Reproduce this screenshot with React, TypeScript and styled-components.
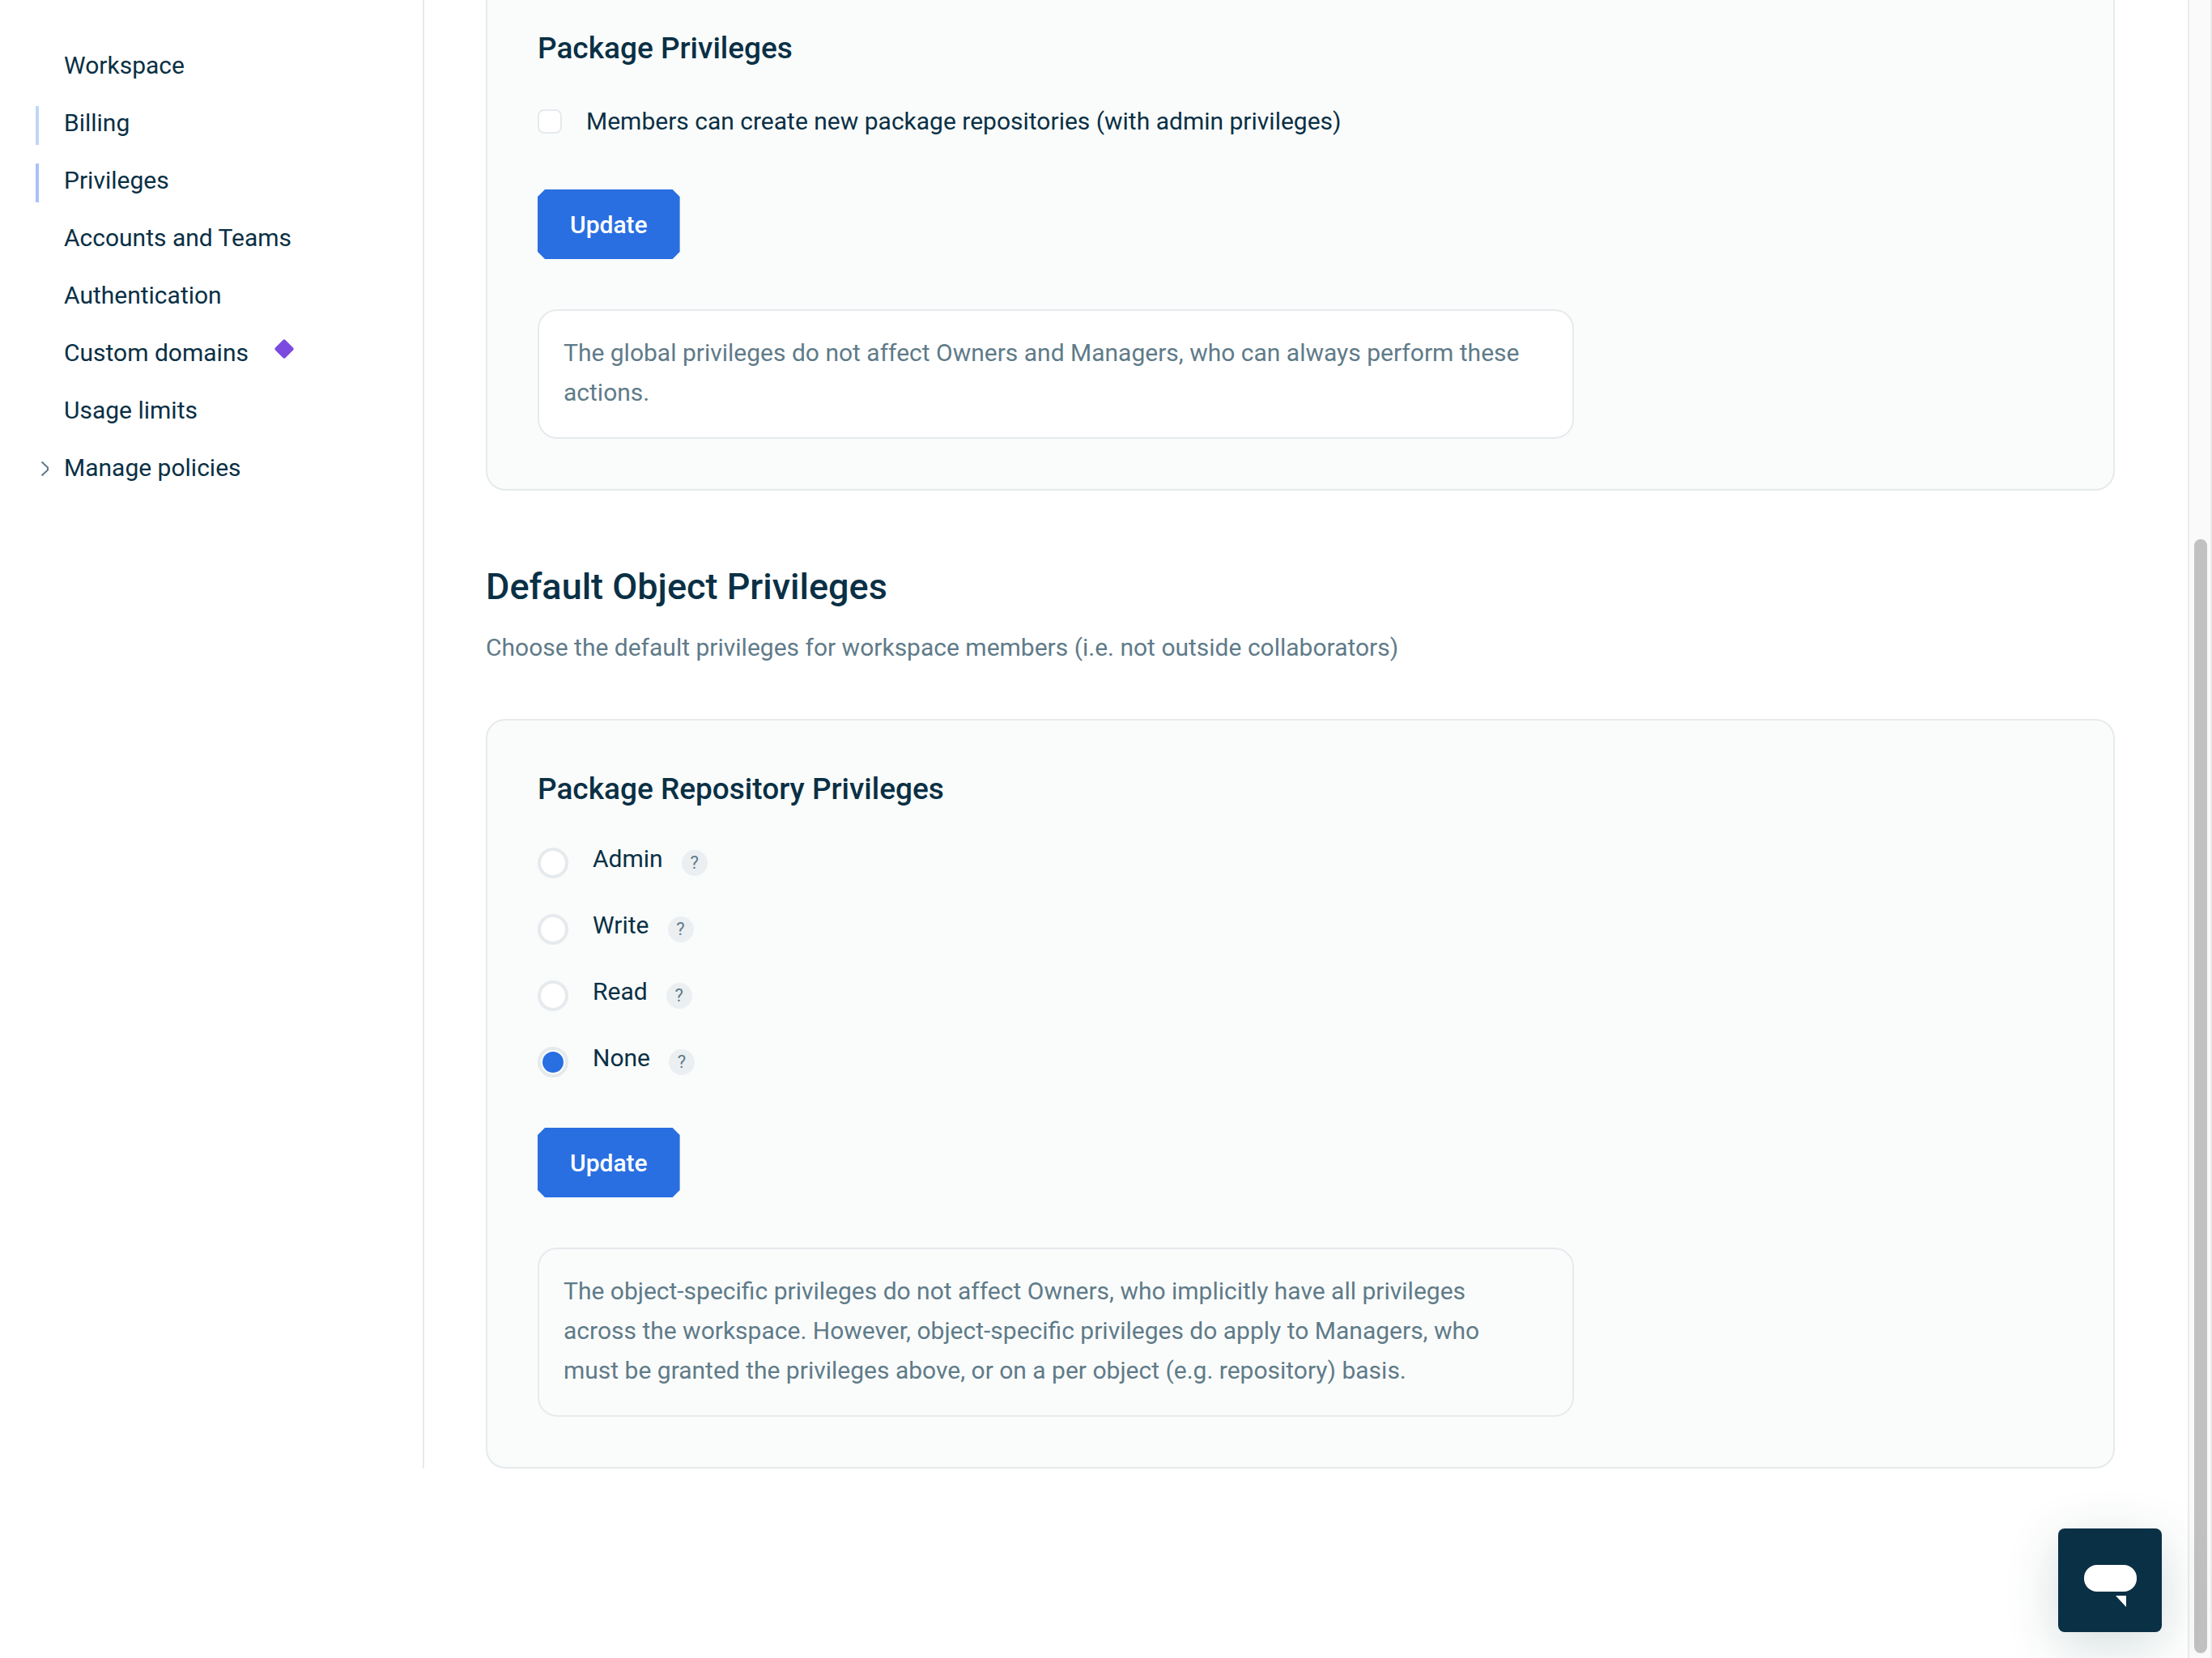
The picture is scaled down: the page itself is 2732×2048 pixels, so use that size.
import React, { useState } from "react";
import styled, { createGlobalStyle } from "styled-components";

const ink = "#0a3045";
const muted = "#5f7b89";
const line = "#e6eaed";
const surface = "#fafcfb";
const blue = "#296fe1";

const GlobalStyle = createGlobalStyle`
  *, *::before, *::after { box-sizing: border-box; }
  body {
    margin: 0;
    background: #fff;
    color: ${ink};
    font-family: Roboto, "Liberation Sans", sans-serif;
    font-size: 30px;
    line-height: 49px;
  }
  h2, h3, p, ul, fieldset { margin: 0; padding: 0; border: 0; }
  button { font: inherit; border: 0; padding: 0; cursor: pointer; }
`;

const Shell = styled.div`
  display: flex;
  height: 100vh;
  overflow: hidden;
`;

const Viewport = styled.div`
  flex: 1;
  min-width: 0;
`;

const Columns = styled.div`
  display: flex;
`;

const Sidebar = styled.nav`
  flex: 0 0 524px;
  padding: 48px 0 0 44px;
  border-right: 2px solid ${line};
`;

const NavList = styled.ul`
  list-style: none;
`;

const NavLink = styled.a<{ $marker?: string }>`
  display: flex;
  align-items: center;
  height: 71px;
  color: ${ink};
  text-decoration: none;

  &::before {
    content: "";
    width: 4px;
    height: 48px;
    background: ${(p) => p.$marker ?? "transparent"};
  }
`;

const NavGutter = styled.span`
  display: flex;
  width: 31px;
  padding: 0 0 4px 2px;
`;

const NavLabel = styled.span`
  padding-bottom: 6px;
  line-height: 48px;
`;

const PremiumMark = styled.svg`
  width: 24px;
  height: 24px;
  margin: 0 0 16px 32px;
`;

const Main = styled.main`
  flex: 1;
  min-width: 0;
  padding: 0 90px 0 76px;
`;

const Card = styled.section<{ $continued?: boolean }>`
  padding: ${(p) => (p.$continued ? "37px" : "62px")} 62px 62px;
  background: ${surface};
  border: 2px solid ${line};
  border-radius: 24px;
  ${(p) => p.$continued && "border-top: 0; border-top-left-radius: 0; border-top-right-radius: 0;"}
`;

const CardTitle = styled.h3`
  font-size: 37px;
  line-height: 46px;
  font-weight: 500;
`;

const SectionHeader = styled.header`
  display: grid;
  gap: 23px;
  padding: 92px 0 64px;
`;

const SectionTitle = styled.h2`
  font-size: 45px;
  line-height: 54px;
  font-weight: 500;
`;

const Lead = styled.p`
  color: ${muted};
`;

const CheckRow = styled.label`
  display: flex;
  align-items: center;
  gap: 30px;
  margin: 42px 0 60px;
`;

const Checkbox = styled.input`
  appearance: none;
  width: 30px;
  height: 30px;
  margin: 0;
  background: #fff;
  border: 2px solid ${line};
  border-radius: 8px;

  &:checked {
    background: ${blue};
  }
`;

const RadioList = styled.fieldset`
  display: grid;
  gap: 22px;
  margin: 38px 0 51px;
  min-width: 0;
`;

const RadioRow = styled.div`
  display: flex;
  align-items: center;
  height: 60px;
`;

const Radio = styled.input`
  appearance: none;
  width: 38px;
  height: 38px;
  margin: 0;
  padding: 2px;
  background: #fff;
  border: 4px solid ${line};
  border-radius: 50%;

  &:checked {
    background: linear-gradient(${blue}, ${blue}) content-box, #fff;
  }
`;

const RadioLabel = styled.label`
  padding: 0 23px 11px 30px;
`;

const Help = styled.button`
  width: 32px;
  height: 32px;
  border-radius: 50%;
  background: #ebeff2;
  color: ${muted};
  font-size: 22px;
  line-height: 32px;
`;

const UpdateButton = styled.button`
  display: block;
  height: 86px;
  padding: 0 40px;
  background: ${blue};
  color: #fff;
  font-weight: 500;
  clip-path: polygon(
    9px 0, calc(100% - 9px) 0, 100% 9px, 100% calc(100% - 9px),
    calc(100% - 9px) 100%, 9px 100%, 0 calc(100% - 9px), 0 9px
  );
`;

const Note = styled.p<{ $filled?: boolean }>`
  max-width: 1280px;
  margin-top: 62px;
  padding: 27px 48px 31px 30px;
  color: ${muted};
  background: ${(p) => (p.$filled ? "#fff" : "transparent")};
  border: 2px solid ${line};
  border-radius: 24px;
`;

const ScrollTrack = styled.div`
  display: flex;
  flex: 0 0 30px;
  flex-direction: column;
  justify-content: flex-end;
  padding: 6px 4px 6px 6px;
  background: #fafafa;
  border: solid #ebebeb;
  border-width: 0 2px;
`;

const ScrollThumb = styled.div`
  height: 67.6%;
  border-radius: 8px;
  background: #c1c1c1;
`;

const ChatButton = styled.button`
  position: fixed;
  right: 62px;
  bottom: 32px;
  width: 128px;
  height: 128px;
  background: ${ink};
  border-radius: 8px;
  box-shadow: 0 16px 64px rgba(10, 60, 60, 0.18);

  svg {
    display: block;
  }
`;

const navItems: { label: string; marker?: string; premium?: boolean; expandable?: boolean }[] = [
  { label: "Workspace" },
  { label: "Billing", marker: "#bfd6fa" },
  { label: "Privileges", marker: "#a8c0fa" },
  { label: "Accounts and Teams" },
  { label: "Authentication" },
  { label: "Custom domains", premium: true },
  { label: "Usage limits" },
  { label: "Manage policies", expandable: true },
];

const levels = ["Admin", "Write", "Read", "None"];

function Chevron() {
  return (
    <svg width="12" height="20" viewBox="0 0 12 20" fill="none" stroke={muted} strokeWidth="2" aria-hidden="true">
      <path d="M1.5 1.5 9 8.5v3L1.5 18.5" />
    </svg>
  );
}

export default function App() {
  const [canCreate, setCanCreate] = useState(false);
  const [level, setLevel] = useState("None");

  return (
    <>
      <GlobalStyle />
      <Shell>
        <Viewport>
          <Columns>
            <Sidebar aria-label="Settings">
              <NavList>
                {navItems.map((item) => (
                  <li key={item.label}>
                    <NavLink href="#" $marker={item.marker}>
                      <NavGutter>{item.expandable && <Chevron />}</NavGutter>
                      <NavLabel>{item.label}</NavLabel>
                      {item.premium && (
                        <PremiumMark viewBox="0 0 24 24" aria-hidden="true">
                          <path
                            d="M12 3 21 12 12 21 3 12Z"
                            fill="#7b4ae0"
                            stroke="#7b4ae0"
                            strokeWidth="5"
                            strokeLinejoin="round"
                          />
                        </PremiumMark>
                      )}
                    </NavLink>
                  </li>
                ))}
              </NavList>
            </Sidebar>

            <Main>
              <Card $continued>
                <CardTitle>Package Privileges</CardTitle>
                <CheckRow>
                  <Checkbox type="checkbox" checked={canCreate} onChange={(e) => setCanCreate(e.target.checked)} />
                  Members can create new package repositories (with admin privileges)
                </CheckRow>
                <UpdateButton type="button">Update</UpdateButton>
                <Note $filled>
                  The global privileges do not affect Owners and Managers, who can always perform these actions.
                </Note>
              </Card>

              <SectionHeader>
                <SectionTitle>Default Object Privileges</SectionTitle>
                <Lead>Choose the default privileges for workspace members (i.e. not outside collaborators)</Lead>
              </SectionHeader>

              <Card>
                <CardTitle id="repo-privileges">Package Repository Privileges</CardTitle>
                <RadioList aria-labelledby="repo-privileges">
                  {levels.map((name) => (
                    <RadioRow key={name}>
                      <Radio
                        type="radio"
                        name="level"
                        id={`level-${name}`}
                        checked={level === name}
                        onChange={() => setLevel(name)}
                      />
                      <RadioLabel htmlFor={`level-${name}`}>{name}</RadioLabel>
                      <Help type="button">?</Help>
                    </RadioRow>
                  ))}
                </RadioList>
                <UpdateButton type="button">Update</UpdateButton>
                <Note>
                  The object-specific privileges do not affect Owners, who implicitly have all privileges across the
                  workspace. However, object-specific privileges do apply to Managers, who must be granted the
                  privileges above, or on a per object (e.g. repository) basis.
                </Note>
              </Card>
            </Main>
          </Columns>
        </Viewport>
        <ScrollTrack aria-hidden="true">
          <ScrollThumb />
        </ScrollTrack>
      </Shell>
      <ChatButton type="button" aria-label="Open chat">
        <svg width="128" height="128" viewBox="0 0 128 128" fill="#fff" aria-hidden="true">
          <rect x="32" y="45" width="65" height="33" rx="16" />
          <path d="M71 83h13v14Z" />
        </svg>
      </ChatButton>
    </>
  );
}
